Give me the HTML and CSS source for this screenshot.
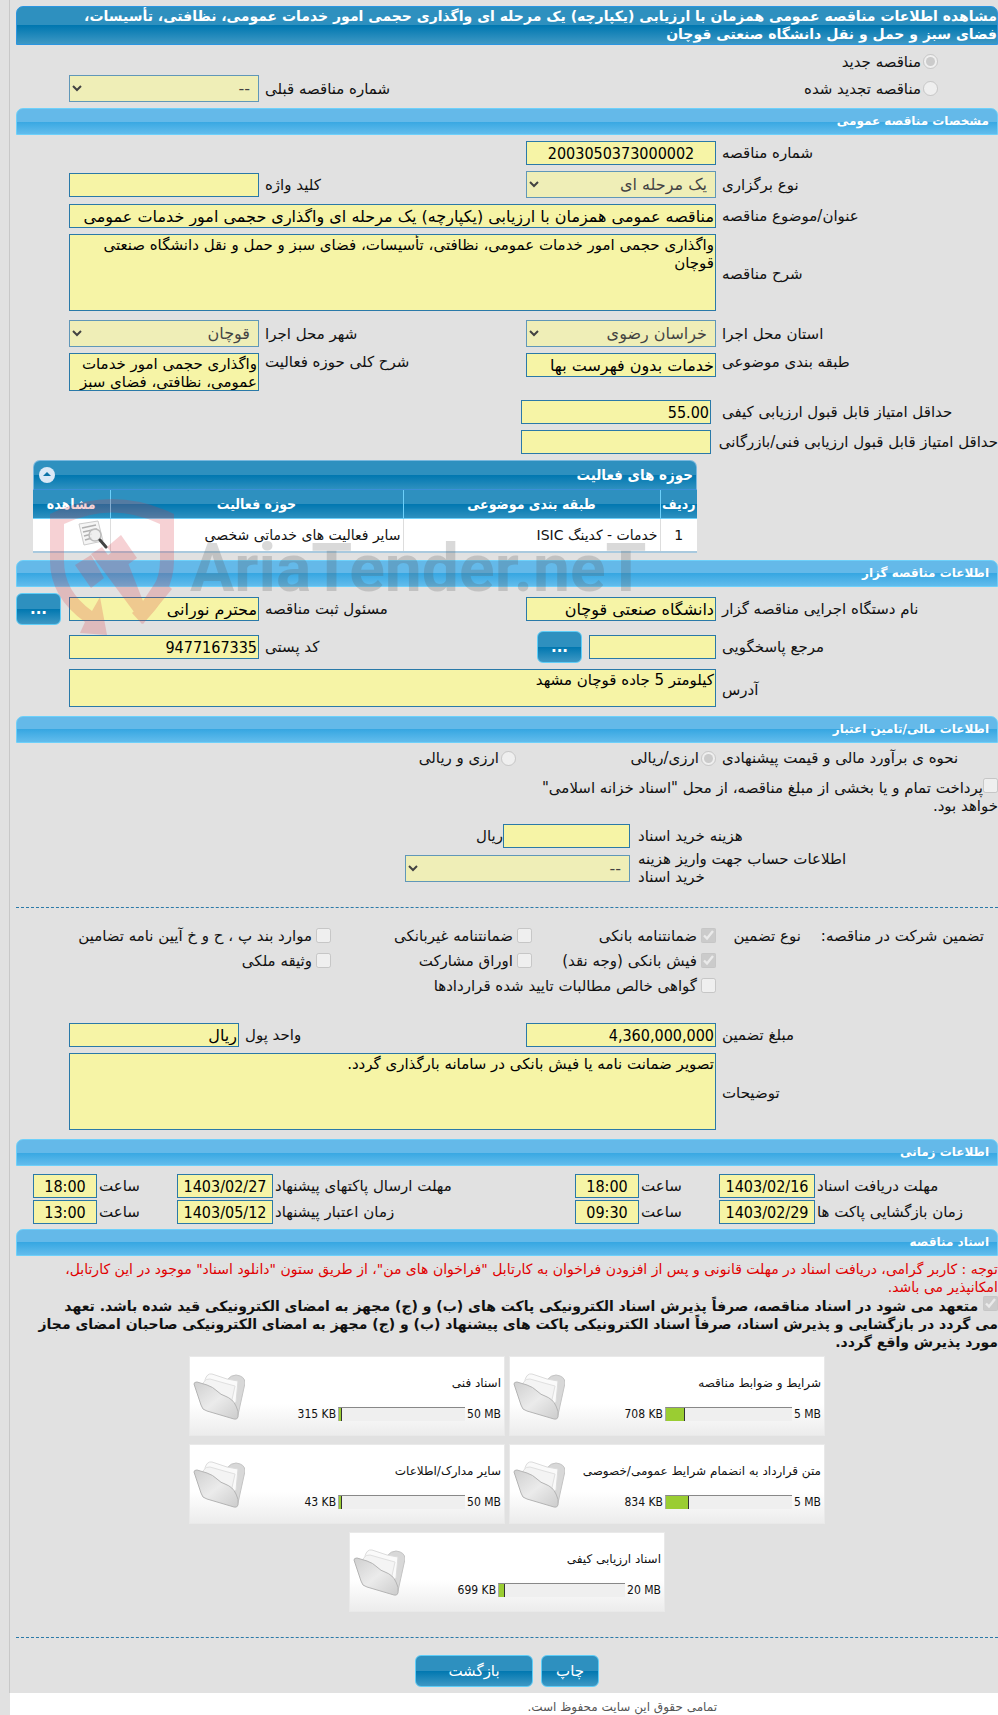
FILE: index.html
```html
<!DOCTYPE html>
<html lang="fa" dir="rtl">
<head>
  <meta charset="UTF-8" />
  <meta name="viewport" content="width=device-width, initial-scale=1" />
  <title>مشاهده اطلاعات مناقصه عمومی</title>
  <link rel="stylesheet" href="styles.css">
</head>
<body>
  <svg class="defs" width="0" height="0" aria-hidden="true">
    <defs>
      <linearGradient id="front" x1="0" y1="0" x2="1" y2="1">
        <stop offset="0" stop-color="#cfcfcf"/>
        <stop offset="0.5" stop-color="#ebebeb"/>
        <stop offset="1" stop-color="#cccccc"/>
      </linearGradient>
      <symbol id="folder" viewBox="0 0 52 48">
        <path d="M34 8 q4 -5 9 -5 q9 1 9 8 L45 43 q-1 3 -3 3 L30 38 Z" fill="#d8d8d8" stroke="#c4c4c4"/>
        <path d="M12 8 q2 -7 7 -6 L34 7 L45 9 L43 30 L38 36 L12 28 Z" fill="#fafafa" stroke="#dcdcdc"/>
        <path d="M10 11 q3 -5 7 -4 L31 11 L42 14 L38 32 L12 28 Z" fill="#f4f4f4" stroke="#e0e0e0"/>
        <path d="M1 12 q0 -2 3 -2 L14 13 q6 2 10 6 q4 4 8 5 q8 3 11 10 q3 5 2 11 q-1 3 -4 2 L14 39 q-5 -1 -6 -6 Z" fill="url(#front)" stroke="#b4b4b4"/>
      </symbol>
    </defs>
  </svg>

  <main class="page">
    <h1 class="title-bar">مشاهده اطلاعات مناقصه عمومی همزمان با ارزیابی (یکپارچه) یک مرحله ای واگذاری حجمی امور خدمات عمومی، نظافتی، تأسیسات، فضای سبز و حمل و نقل دانشگاه صنعتی قوچان</h1>

    <div class="kind">
      <label class="kind-item"><input type="radio" name="kind" checked disabled>مناقصه جدید</label>
      <label class="kind-item"><input type="radio" name="kind" disabled>مناقصه تجدید شده</label>
      <label class="label" for="prev">شماره مناقصه قبلی</label>
      <select id="prev" disabled><option>--</option></select>
    </div>

    <!-- مشخصات مناقصه -->
    <h2 class="bar">مشخصات مناقصه عمومی</h2>
    <div class="fields">
      <label class="label" for="number">شماره مناقصه</label>
      <input class="center" type="text" id="number" value="2003050373000002" readonly>

      <label class="label first" for="type">نوع برگزاری</label>
      <select id="type" disabled><option>یک مرحله ای</option></select>
      <label class="label" for="keyword">کلید واژه</label>
      <input type="text" id="keyword" readonly>

      <label class="label first" for="subject">عنوان/موضوع مناقصه</label>
      <input class="wide strong" type="text" id="subject" value="مناقصه عمومی همزمان با ارزیابی (یکپارچه) یک مرحله ای واگذاری حجمی امور خدمات عمومی" readonly>

      <label class="label first" for="desc">شرح مناقصه</label>
      <textarea class="wide tall" id="desc" readonly>واگذاری حجمی امور خدمات عمومی، نظافتی، تأسیسات، فضای سبز و حمل و نقل دانشگاه صنعتی قوچان</textarea>

      <label class="label first" for="province">استان محل اجرا</label>
      <select id="province" disabled><option>خراسان رضوی</option></select>
      <label class="label" for="city">شهر محل اجرا</label>
      <select id="city" disabled><option>قوچان</option></select>

      <label class="label first top" for="category">طبقه بندی موضوعی</label>
      <input class="top strong" type="text" id="category" value="خدمات بدون فهرست بها" readonly>
      <label class="label top" for="area">شرح کلی حوزه فعالیت</label>
      <textarea class="short" id="area" readonly>واگذاری حجمی امور خدمات عمومی، نظافتی، فضای سبز</textarea>

      <label class="label first" for="quality">حداقل امتیاز قابل قبول ارزیابی کیفی</label>
      <input class="score" type="text" id="quality" value="55.00" readonly>
      <label class="label first" for="technical">حداقل امتیاز قابل قبول ارزیابی فنی/بازرگانی</label>
      <input class="score" type="text" id="technical" readonly>
    </div>

    <div class="grid-box">
      <div class="grid-title">
        <span>حوزه های فعالیت</span>
        <button type="button" class="collapse" aria-label="بستن">
          <svg width="16" height="16" viewBox="0 0 16 16"><circle cx="8" cy="8" r="8" fill="#dbe8f6"/><path d="M4 9 L8 5 L12 9 Z" fill="#0c73a8"/></svg>
        </button>
      </div>
      <table>
        <thead>
          <tr><th class="c-row">ردیف</th><th class="c-cat">طبقه بندی موضوعی</th><th>حوزه فعالیت</th><th class="c-view">مشاهده</th></tr>
        </thead>
        <tbody>
          <tr>
            <td class="mid">1</td><td>خدمات - کدینگ ISIC</td><td>سایر فعالیت های خدماتی شخصی</td>
            <td class="view">
              <svg width="30" height="30" viewBox="0 0 30 30">
                <path d="M1 4 L20 1 L25 21 L6 25 Z" fill="#f5f5f5" stroke="#ccc"/>
                <path d="M4 8 L18 5 M5 12 L19 9 M6 16 L14 14 M7 20 L14 18" stroke="#b0b0b0" stroke-width="1.5"/>
                <circle cx="17" cy="15" r="6" fill="#eee" fill-opacity=".8" stroke="#bbb" stroke-width="1.5"/>
                <path d="M22 20 L28 27" stroke="#444" stroke-width="3" stroke-linecap="round"/>
              </svg>
            </td>
          </tr>
        </tbody>
      </table>

      <div class="watermark" aria-hidden="true">
        <svg width="124" height="136" viewBox="0 0 124 136" fill="#d9333f">
          <path d="M0 15 Q62 -15 124 15 V62 Q124 95 92 125 L82 114 Q110 90 110 62 V25 Q62 2 14 25 V62 Q14 92 42 112 L50 98 L57 136 L30 134 L35 123 Q0 98 0 62 Z"/>
          <path d="M25 66 L41 56 L54 79 L41 89 Z M41 55 L52 48 L58 56 L71 46 L93 102 L109 78 L122 90 L93 125 Z M57 48 L71 36 L87 59 L73 69 Z"/>
        </svg>
        <span>AriaTender.neT</span>
      </div>
    </div>

    <!-- مناقصه گزار -->
    <h2 class="bar">اطلاعات مناقصه گزار</h2>
    <div class="fields owner">
      <label class="label first" for="org">نام دستگاه اجرایی مناقصه گزار</label>
      <input class="strong" type="text" id="org" value="دانشگاه صنعتی قوچان" readonly>
      <label class="label" for="person">مسئول ثبت مناقصه</label>
      <input class="strong" type="text" id="person" value="محترم نورانی" readonly>
      <button type="button" class="btn more">...</button>

      <label class="label first" for="contact">مرجع پاسخگویی</label>
      <div class="with-button">
        <input type="text" id="contact" readonly>
        <button type="button" class="btn more">...</button>
      </div>
      <label class="label" for="postal">کد پستی</label>
      <input type="text" id="postal" value="9477167335" readonly>

      <label class="label first" for="address">آدرس</label>
      <textarea class="wide short" id="address" readonly>کیلومتر 5 جاده قوچان مشهد</textarea>
    </div>

    <!-- اطلاعات مالی -->
    <h2 class="bar">اطلاعات مالی/تامین اعتبار</h2>
    <div class="estimate">
      <span class="label">نحوه ی برآورد مالی و قیمت پیشنهادی</span>
      <label class="check"><input type="radio" name="currency" checked disabled>ارزی/ریالی</label>
      <label class="check"><input type="radio" name="currency" disabled>ارزی و ریالی</label>
    </div>
    <label class="treasury"><input type="checkbox" disabled>پرداخت تمام و یا بخشی از مبلغ مناقصه، از محل "اسناد خزانه اسلامی" خواهد بود.</label>
    <div class="cost">
      <label class="label" for="price">هزینه خرید اسناد</label>
      <div class="price"><input type="text" id="price" readonly><span>ریال</span></div>
      <label class="label" for="account">اطلاعات حساب جهت واریز هزینه خرید اسناد</label>
      <select id="account" disabled><option>--</option></select>
    </div>

    <hr>

    <div class="guarantee">
      <div class="guarantee-name"><span>تضمین شرکت در مناقصه:</span><span>نوع تضمین</span></div>
      <label class="check"><input type="checkbox" checked disabled>ضمانتنامه بانکی</label>
      <label class="check"><input type="checkbox" disabled>ضمانتنامه غیربانکی</label>
      <label class="check"><input type="checkbox" disabled>موارد بند پ ، ح و خ آیین نامه تضامین</label>
      <label class="check second"><input type="checkbox" checked disabled>فیش بانکی (وجه نقد)</label>
      <label class="check"><input type="checkbox" disabled>اوراق مشارکت</label>
      <label class="check"><input type="checkbox" disabled>وثیقه ملکی</label>
      <label class="check second long"><input type="checkbox" disabled>گواهی خالص مطالبات تایید شده قراردادها</label>
    </div>

    <div class="fields amount">
      <label class="label first" for="amount">مبلغ تضمین</label>
      <input type="text" id="amount" value="4,360,000,000" readonly>
      <label class="label" for="unit">واحد پول</label>
      <input class="strong" type="text" id="unit" value="ریال" readonly>
      <label class="label first" for="notes">توضیحات</label>
      <textarea class="wide tall" id="notes" readonly>تصویر ضمانت نامه یا فیش بانکی در سامانه بارگذاری گردد.</textarea>
    </div>

    <!-- اطلاعات زمانی -->
    <h2 class="bar">اطلاعات زمانی</h2>
    <div class="times">
      <label class="label" for="d1">مهلت دریافت اسناد</label>
      <input class="center" type="text" id="d1" value="1403/02/16" readonly>
      <label class="label" for="t1">ساعت</label>
      <input class="center" type="text" id="t1" value="18:00" readonly>
      <label class="label" for="d2">مهلت ارسال پاکتهای پیشنهاد</label>
      <input class="center" type="text" id="d2" value="1403/02/27" readonly>
      <label class="label" for="t2">ساعت</label>
      <input class="center" type="text" id="t2" value="18:00" readonly>

      <label class="label" for="d3">زمان بازگشایی پاکت ها</label>
      <input class="center" type="text" id="d3" value="1403/02/29" readonly>
      <label class="label" for="t3">ساعت</label>
      <input class="center" type="text" id="t3" value="09:30" readonly>
      <label class="label" for="d4">زمان اعتبار پیشنهاد</label>
      <input class="center" type="text" id="d4" value="1403/05/12" readonly>
      <label class="label" for="t4">ساعت</label>
      <input class="center" type="text" id="t4" value="13:00" readonly>
    </div>

    <!-- اسناد -->
    <h2 class="bar">اسناد مناقصه</h2>
    <p class="notice">توجه : کاربر گرامی، دریافت اسناد در مهلت قانونی و پس از افزودن فراخوان به کارتابل "فراخوان های من"، از طریق ستون "دانلود اسناد" موجود در این کارتابل،<br>امکانپذیر می باشد.</p>
    <label class="commit"><input type="checkbox" checked disabled> متعهد می شود در اسناد مناقصه، صرفاً پذیرش اسناد الکترونیکی پاکت های (ب) و (ج) مجهز به امضای الکترونیکی قید شده باشد. تعهد<br>می گردد در بازگشایی و پذیرش اسناد، صرفاً اسناد الکترونیکی پاکت های پیشنهاد (ب) و (ج) مجهز به امضای الکترونیکی صاحبان امضای مجاز مورد پذیرش واقع گردد.</label>

    <div class="docs">
      <div class="doc">
        <span class="doc-name">شرایط و ضوابط مناقصه</span>
        <div class="usage"><span>708 KB</span><div class="track"><div class="fill" style="width: 15%"></div></div><span>5 MB</span></div>
        <svg class="folder"><use href="#folder"/></svg>
      </div>
      <div class="doc">
        <span class="doc-name">اسناد فنی</span>
        <div class="usage"><span>315 KB</span><div class="track"><div class="fill" style="width: 2%"></div></div><span>50 MB</span></div>
        <svg class="folder"><use href="#folder"/></svg>
      </div>
      <div class="doc">
        <span class="doc-name">متن قرارداد به انضمام شرایط عمومی/خصوصی</span>
        <div class="usage"><span>834 KB</span><div class="track"><div class="fill" style="width: 18%"></div></div><span>5 MB</span></div>
        <svg class="folder"><use href="#folder"/></svg>
      </div>
      <div class="doc">
        <span class="doc-name">سایر مدارک/اطلاعات</span>
        <div class="usage"><span>43 KB</span><div class="track"><div class="fill" style="width: 2%"></div></div><span>50 MB</span></div>
        <svg class="folder"><use href="#folder"/></svg>
      </div>
      <div class="doc">
        <span class="doc-name">اسناد ارزیابی کیفی</span>
        <div class="usage"><span>699 KB</span><div class="track"><div class="fill" style="width: 5%"></div></div><span>20 MB</span></div>
        <svg class="folder"><use href="#folder"/></svg>
      </div>
    </div>

    <hr>

    <div class="actions">
      <button type="button" class="btn">چاپ</button>
      <button type="button" class="btn back">بازگشت</button>
    </div>
  </main>
  <footer class="footer">تمامی حقوق این سایت محفوظ است.</footer>
</body>
</html>
```
FILE: styles.css
```css
* {
  box-sizing: border-box;
}

body {
  margin: 0;
  background-color: #e1e1e1;
  color: #111;
  font-family: "DejaVu Sans", sans-serif;
  font-size: 15px;
  line-height: 18px;
  overflow-x: hidden;
}

.defs {
  position: absolute;
}

.page {
  margin-left: 9px;
  padding: 6px 0 6px 6px;
  border-left: 1px solid #c8c8c8;
}

.title-bar {
  margin: 0;
  padding: 0 0 1px 32px;
  border: 1px solid #2b95e0;
  border-radius: 7px 7px 0 0;
  background: linear-gradient(#2e90bf 50%, #0077b0 50%, #3e98c4);
  color: white;
  font-size: 14px;
  line-height: 18px;
}

.bar {
  margin: 0;
  padding: 0 8px;
  height: 27px;
  border: 1px solid #6dd0fa;
  border-radius: 7px 7px 0 0;
  background: linear-gradient(#64b9e9 50%, #37a7e2 50%, #62bcec);
  color: white;
  font-size: 12px;
  line-height: 25px;
}

input,
select,
textarea,
button {
  margin: 0;
  font-family: inherit;
}

input[type="text"],
select,
textarea {
  width: 100%;
  border: 1px solid #2a79a8;
  border-radius: 0;
  background-color: #f6f4a6;
  color: #000;
}

input[type="text"] {
  height: 24px;
  padding: 0 1px;
  font-family: "DejaVu Sans Condensed", "DejaVu Sans", sans-serif;
  font-size: 16px;
}

input.center {
  text-align: center;
}

input[type="text"].strong {
  font-family: "DejaVu Sans", sans-serif;
}

select {
  height: 27px;
  padding: 0 4px;
  font-size: 16px;
}

select:disabled {
  color: #000;
  opacity: 0.7;
}

textarea {
  display: block;
  margin-bottom: 3px;
  padding: 1px;
  font-size: 15px;
  line-height: 18px;
  resize: none;
  overflow: hidden;
}

textarea.tall {
  height: 77px;
}

textarea.short {
  height: 38px;
}

input[type="radio"],
input[type="checkbox"] {
  flex: none;
  width: 15px;
  height: 15px;
}

.label {
  padding-left: 6px;
  text-align: left;
}

.kind {
  display: grid;
  grid-template-columns: 1fr 190px 53px;
  align-items: center;
  padding: 3px 0 6px;
}

.kind-item {
  display: flex;
  gap: 2px;
  grid-column: 1 / 4;
  grid-row: 1;
  height: 27px;
  padding-right: 60px;
  align-items: center;
}

.kind-item + .kind-item {
  grid-column: 1;
  grid-row: 2;
}

.kind .label {
  grid-column: 1;
  grid-row: 2;
  justify-self: end;
}

.kind select {
  grid-row: 2;
}

.fields {
  display: grid;
  grid-template-columns: 282px 190px 1fr 190px 53px;
  row-gap: 6px;
  align-items: center;
  padding: 6px 0;
}

.fields .label {
  white-space: nowrap;
}

.first {
  grid-column: 1;
}

.top {
  align-self: start;
}

.wide {
  grid-column: 2 / 5;
}

.fields .score {
  width: 190px;
  margin-right: 5px;
}

.grid-box {
  position: relative;
  margin: 0 301px 7px 17px;
}

.grid-title {
  display: flex;
  justify-content: space-between;
  align-items: center;
  height: 30px;
  padding: 0 3px 0 5px;
  border: 1px solid #7ab8de;
  border-bottom-color: #3b8fd8;
  border-radius: 7px 7px 0 0;
  background: linear-gradient(#2e90bf 50%, #0077b0 50%, #2e90bf);
  color: white;
  font-family: "DejaVu Sans Condensed", "DejaVu Sans", sans-serif;
  font-weight: bold;
}

.collapse {
  display: flex;
  padding: 0;
  border: 0;
  background: none;
  cursor: pointer;
}

table {
  width: 100%;
  border-collapse: collapse;
  table-layout: fixed;
  border-bottom: 2px solid #a9c9de;
}

th {
  height: 28px;
  padding: 0;
  border-bottom: 1px solid #6dd0fa;
  border-left: 1px solid #6dd0fa;
  background: linear-gradient(#2e90bf 50%, #0077b0 50%, #2e90bf);
  color: white;
  font-family: "DejaVu Sans Condensed", "DejaVu Sans", sans-serif;
  font-size: 14px;
}

td {
  height: 34px;
  padding: 0 2px;
  border-left: 1px solid #ddd;
  background-color: white;
  font-size: 14px;
}

th:last-child,
td:last-child {
  border-left: 0;
}

.c-row {
  width: 37px;
}

.c-cat {
  width: 257px;
}

.c-view {
  width: 77px;
}

.mid {
  text-align: center;
}

.view svg {
  display: block;
}

/* logo over the page */
.watermark {
  position: absolute;
  top: 39px;
  left: 17px;
  display: flex;
  direction: ltr;
  gap: 16px;
  opacity: 0.22;
  pointer-events: none;
}

.watermark svg {
  flex: none;
}

.watermark span {
  color: #555;
  font-family: Roboto, "Liberation Sans", sans-serif;
  font-size: 66px;
  font-weight: bold;
  line-height: 140px;
}

.btn {
  min-width: 58px;
  height: 32px;
  padding: 0;
  border: 1px solid #5fcdf7;
  border-radius: 6px;
  background: linear-gradient(#2e90bf 50%, #0077b0 50%, #3e98c4);
  color: white;
  font-size: 15px;
  cursor: pointer;
}

.btn.back {
  min-width: 118px;
}

.btn.more {
  min-width: 45px;
  font-weight: bold;
}

.owner .btn.more {
  justify-self: end;
}

.with-button {
  display: flex;
  justify-content: space-between;
  align-items: center;
  padding-left: 11px;
}

.with-button input[type="text"] {
  width: 127px;
}

.estimate {
  display: grid;
  grid-template-columns: 282px 200px 1fr;
  padding: 6px 0;
}

.check {
  display: flex;
  align-items: center;
  gap: 4px;
}

.estimate .check {
  gap: 2px;
}

.treasury {
  display: block;
  width: 470px;
  max-width: 100%;
  padding-top: 5px;
}

.cost {
  display: grid;
  grid-template-columns: 368px 225px;
  align-items: center;
  row-gap: 2px;
  padding: 9px 0 21px;
}

.cost .label {
  padding-right: 150px;
  padding-left: 8px;
}

.price {
  display: flex;
  align-items: center;
}

.price input[type="text"] {
  width: 127px;
}

hr {
  margin: 0;
  border: 0;
  border-top: 1px dashed #2a79a8;
}

.guarantee {
  display: grid;
  grid-template-columns: 282px 184px 201px 1fr;
  grid-auto-rows: 25px;
  padding: 15px 0 19px;
}

.guarantee-name {
  display: flex;
  align-items: center;
  gap: 20px;
  padding-right: 14px;
}

.guarantee .second {
  grid-column: 2;
}

.guarantee .long {
  grid-column: 2 / 4;
}

.amount #unit {
  width: 170px;
  justify-self: end;
}

.amount label[for="unit"] {
  margin-left: -20px;
}

.times {
  display: grid;
  grid-template-columns: 183px 96px 80px 64px 1fr 96px 80px 64px;
  align-items: center;
  row-gap: 2px;
  padding: 8px 0 5px 17px;
}

.times .label {
  padding-left: 2px;
}

.notice {
  margin: 0;
  padding-top: 4px;
  color: #e00000;
  font-size: 14px;
}

.commit {
  display: block;
  font-size: 14px;
  font-weight: bold;
}

.docs {
  display: flex;
  flex-wrap: wrap;
  justify-content: center;
  gap: 8px 4px;
  max-width: 640px;
  margin: 5px auto 25px;
}

.doc {
  display: grid;
  grid-template-columns: 1fr 70px;
  grid-template-rows: 31px 22px;
  align-content: center;
  row-gap: 4px;
  width: 316px;
  height: 80px;
  padding: 0 3px;
  border: 1px solid #e9e9e9;
  background: linear-gradient(#fff 60%, #ececec);
  font-size: 12px;
}

.doc-name {
  grid-column: 1 / 3;
  grid-row: 1;
  align-self: center;
}

.usage {
  display: flex;
  direction: ltr;
  justify-content: flex-end;
  align-items: center;
  gap: 2px;
  font-family: "DejaVu Sans Condensed", "DejaVu Sans", sans-serif;
}

.track {
  width: 127px;
  height: 14px;
  border-top: 1px solid #888;
  border-left: 1px solid #aaa;
  background-color: #efefef;
}

.fill {
  height: 100%;
  border-right: 1px solid #333;
  background-color: #9acd32;
}

.folder {
  grid-column: 2;
  grid-row: 1 / 3;
  justify-self: end;
  align-self: center;
  width: 52px;
  height: 48px;
}

.actions {
  display: flex;
  justify-content: center;
  gap: 8px;
  padding: 17px 0 0;
}

.footer {
  margin-left: 10px;
  padding: 6px 281px 0 0;
  background-color: white;
  color: #555;
  font-size: 12px;
  line-height: 16px;
}
```
